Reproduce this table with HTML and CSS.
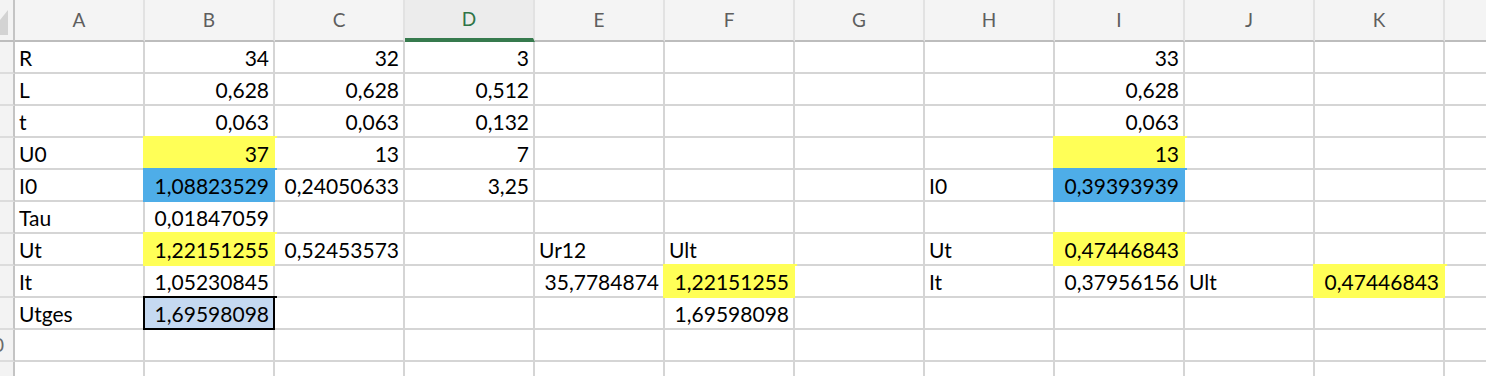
FILE: index.html
```html
<!DOCTYPE html>
<html lang="de">
<head>
<meta charset="utf-8">
<title>Tabelle</title>
<link rel="stylesheet" href="styles.css">
</head>
<body>
<div class="sheet">
  <div class="corner"><svg class="corner-tri" width="13" height="40" viewBox="0 0 13 40"><polygon points="0,20 8,10 8,35 0,35" fill="#d3d3d3"/></svg></div>
  <div class="colhead">A</div>
  <div class="colhead">B</div>
  <div class="colhead">C</div>
  <div class="colhead sel">D</div>
  <div class="colhead">E</div>
  <div class="colhead">F</div>
  <div class="colhead">G</div>
  <div class="colhead">H</div>
  <div class="colhead">I</div>
  <div class="colhead">J</div>
  <div class="colhead">K</div>
  <div class="colhead last"></div>

  <div class="rowhead"></div>
  <div class="c">R</div><div class="c n">34</div><div class="c n">32</div><div class="c n">3</div><div class="c"></div><div class="c"></div><div class="c"></div><div class="c"></div><div class="c n">33</div><div class="c"></div><div class="c"></div><div class="c last"></div>

  <div class="rowhead"></div>
  <div class="c">L</div><div class="c n">0,628</div><div class="c n">0,628</div><div class="c n">0,512</div><div class="c"></div><div class="c"></div><div class="c"></div><div class="c"></div><div class="c n">0,628</div><div class="c"></div><div class="c"></div><div class="c last"></div>

  <div class="rowhead"></div>
  <div class="c">t</div><div class="c n">0,063</div><div class="c n">0,063</div><div class="c n">0,132</div><div class="c"></div><div class="c"></div><div class="c"></div><div class="c"></div><div class="c n">0,063</div><div class="c"></div><div class="c"></div><div class="c last"></div>

  <div class="rowhead"></div>
  <div class="c">U0</div><div class="c n y">37</div><div class="c n">13</div><div class="c n">7</div><div class="c"></div><div class="c"></div><div class="c"></div><div class="c"></div><div class="c n y">13</div><div class="c"></div><div class="c"></div><div class="c last"></div>

  <div class="rowhead"></div>
  <div class="c">I0</div><div class="c n b">1,08823529</div><div class="c n">0,24050633</div><div class="c n">3,25</div><div class="c"></div><div class="c"></div><div class="c"></div><div class="c">I0</div><div class="c n b">0,39393939</div><div class="c"></div><div class="c"></div><div class="c last"></div>

  <div class="rowhead"></div>
  <div class="c">Tau</div><div class="c n">0,01847059</div><div class="c"></div><div class="c"></div><div class="c"></div><div class="c"></div><div class="c"></div><div class="c"></div><div class="c"></div><div class="c"></div><div class="c"></div><div class="c last"></div>

  <div class="rowhead"></div>
  <div class="c">Ut</div><div class="c n y">1,22151255</div><div class="c n">0,52453573</div><div class="c"></div><div class="c">Ur12</div><div class="c">Ult</div><div class="c"></div><div class="c">Ut</div><div class="c n y">0,47446843</div><div class="c"></div><div class="c"></div><div class="c last"></div>

  <div class="rowhead"></div>
  <div class="c">It</div><div class="c n">1,05230845</div><div class="c"></div><div class="c"></div><div class="c n">35,7784874</div><div class="c n y">1,22151255</div><div class="c"></div><div class="c">It</div><div class="c n">0,37956156</div><div class="c">Ult</div><div class="c n y">0,47446843</div><div class="c last"></div>

  <div class="rowhead"></div>
  <div class="c">Utges</div><div class="c n lb">1,69598098</div><div class="c"></div><div class="c"></div><div class="c"></div><div class="c n">1,69598098</div><div class="c"></div><div class="c"></div><div class="c"></div><div class="c"></div><div class="c"></div><div class="c last"></div>

  <div class="rowhead"><span>10</span></div>
  <div class="c"></div><div class="c"></div><div class="c"></div><div class="c"></div><div class="c"></div><div class="c"></div><div class="c"></div><div class="c"></div><div class="c"></div><div class="c"></div><div class="c"></div><div class="c last"></div>

  <div class="rowhead"></div>
  <div class="c"></div><div class="c"></div><div class="c"></div><div class="c"></div><div class="c"></div><div class="c"></div><div class="c"></div><div class="c"></div><div class="c"></div><div class="c"></div><div class="c"></div><div class="c last"></div>
</div>
</body>
</html>
```
FILE: styles.css
```css
html, body {
  margin: 0;
  padding: 0;
  background: #ffffff;
  overflow: hidden;
}

.sheet {
  display: grid;
  grid-template-columns: 15px repeat(11, 130px) 41px;
  grid-template-rows: 42px repeat(11, 32px);
  font-family: "Lato", "Open Sans", sans-serif;
  font-size: 21px;
  color: #000;
}

.corner {
  background: #f3f3f3;
  border-right: 2px solid #c4c4c4;
  border-bottom: 2px solid #bdbdbd;
  overflow: hidden;
}

.corner-tri {
  display: block;
}

.colhead {
  background: #f4f4f4;
  border-right: 2px solid #e2e2e2;
  border-bottom: 2px solid #bdbdbd;
  color: #5e5e5e;
  font-size: 19px;
  text-align: center;
  line-height: 40px;
}

.colhead.sel {
  background: #ececec;
  color: #2f7447;
  border-bottom: 4px solid #367a4d;
  line-height: 38px;
}

.colhead.last {
  border-right: none;
}

.rowhead {
  background: #f3f3f3;
  border-right: 2px solid #c4c4c4;
  border-bottom: 2px solid #dcdcdc;
  overflow: hidden;
}

.rowhead span {
  display: block;
  width: 40px;
  margin-left: -27px;
  text-align: center;
  color: #6a6a6a;
  font-size: 19px;
  line-height: 30px;
}

.c {
  background: #ffffff;
  border-right: 2px solid #d5d5d5;
  border-bottom: 2px solid #d5d5d5;
  padding: 0 4px;
  line-height: 31px;
  white-space: nowrap;
}

.c.last {
  border-right: none;
}

.n {
  text-align: right;
}

.y {
  background: #ffff57;
  border-color: #ffff57;
  box-shadow: 0 0 0 2px #ffff57;
}

.b {
  background: #4eade8;
  border-color: #4eade8;
  box-shadow: 0 0 0 2px #4eade8;
}

.lb {
  background: #c5d9f1;
  border-color: #000;
  box-shadow: 0 0 0 2px #000;
}
```
